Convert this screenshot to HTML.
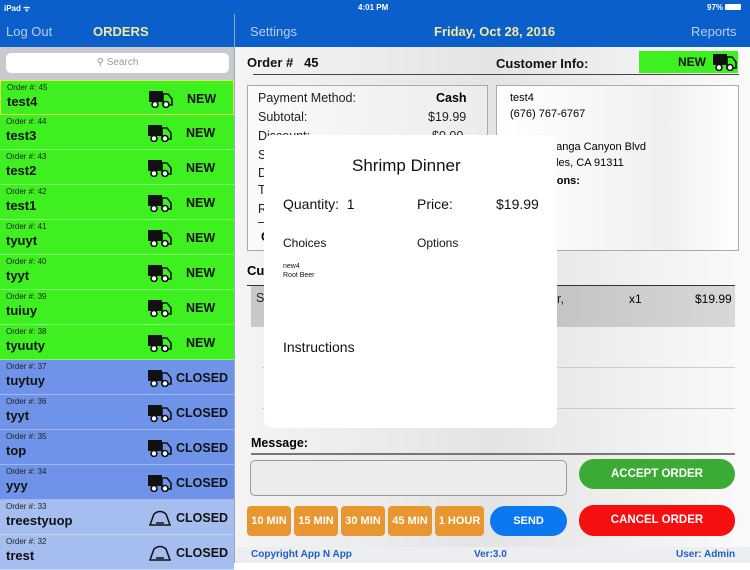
<!DOCTYPE html>
<html><head><meta charset="utf-8"><style>
*{margin:0;padding:0;box-sizing:border-box}
body{width:750px;height:563px;overflow:hidden;position:relative;font-family:"Liberation Sans",sans-serif;background:#fff}
.a{position:absolute;white-space:nowrap}
.row{position:absolute;left:0;width:234px;height:35px;border-bottom:1px solid rgba(255,255,255,.35)}
.row .on{position:absolute;left:6px;top:2px;font-size:8px;color:#222}
.row .nm{position:absolute;left:6px;top:13px;font-size:13px;font-weight:bold;color:#111}
.row .st{position:absolute;top:11px;font-size:12.5px;font-weight:bold;color:#111}
.row svg{position:absolute;top:9px;left:148px}
.tb{position:absolute;top:506px;height:30px;background:#e8962f;color:#fff;font-size:11px;font-weight:bold;text-align:center;line-height:30px;border-radius:4px;width:31px}
.pl{font-size:12.5px;color:#222}
</style></head><body>
<div class="a" style="left:0;top:0;width:750px;height:47px;background:#0a5fcb"></div>
<div class="a" style="left:4px;top:3px;font-size:8px;color:#fff;font-weight:bold">iPad ᯤ</div>
<div class="a" style="left:358px;top:3px;font-size:8px;color:#fff;font-weight:bold">4:01 PM</div>
<div class="a" style="left:707px;top:3px;font-size:8px;color:#fff;font-weight:bold">97%</div>
<div class="a" style="left:725px;top:4px;width:16px;height:6px;background:#fff;border-radius:1px"></div>
<div class="a" style="left:6px;top:24px;font-size:13px;color:#b9cdec">Log Out</div>
<div class="a" style="left:93px;top:24px;font-size:13px;color:#f0ea9a;font-weight:bold">ORDERS</div>
<div class="a" style="left:234px;top:14px;width:1px;height:549px;background:#9ab"></div>
<div class="a" style="left:250px;top:24px;font-size:13px;color:#b9cdec">Settings</div>
<div class="a" style="left:434px;top:24px;font-size:13px;color:#f0ea9a;font-weight:bold">Friday, Oct 28, 2016</div>
<div class="a" style="left:691px;top:24px;font-size:13px;color:#b9cdec">Reports</div>
<div class="a" style="left:0;top:47px;width:234px;height:33px;background:#c9c9ce"></div>
<div class="a" style="left:6px;top:53px;width:223px;height:20px;background:#fff;border-radius:5px;text-align:center;font-size:10px;color:#999;line-height:20px">&#9906; Search</div>
<div id="rows"></div>
<script>
var d=[[45,'test4'],[44,'test3'],[43,'test2'],[42,'test1'],[41,'tyuyt'],[40,'tyyt'],[39,'tuiuy'],[38,'tyuuty'],[37,'tuytuy'],[36,'tyyt'],[35,'top'],[34,'yyy'],[33,'treestyuop'],[32,'trest']];
var h='';
var truck='<path d="M0 1h14v11H0z" fill="#111"/><path d="M14 4h5l4 5v6H14z" fill="none" stroke="#111" stroke-width="1.6"/><circle cx="6" cy="14.5" r="3" fill="#fff" stroke="#111" stroke-width="1.6"/><circle cx="17" cy="14.5" r="3" fill="#fff" stroke="#111" stroke-width="1.6"/>';
var bag='<path d="M2 16 L6 5 Q12 0 18 5 L22 16 Z" fill="none" stroke="#111" stroke-width="1.5"/><path d="M8 14h8" stroke="#111" stroke-width="1.5"/>';
d.forEach(function(r,i){
 var y=80+i*35,bg=i<8?'#3ef01f':(i<12?'#6f93e8':'#a6bdf0');
 var st=i<8?'<div class="st" style="left:186px">NEW</div>':'<div class="st" style="left:176px">CLOSED</div>';
 var ic=i<12?truck:bag;
 var bd=i==0?'border:1.5px solid #e4e845;':'';
 h+='<div class="row" style="top:'+y+'px;background:'+bg+';'+bd+'"><div class="on">Order #: '+r[0]+'</div><div class="nm">'+r[1]+'</div><svg width="24" height="18" viewBox="0 0 24 18">'+ic+'</svg>'+st+'</div>';
});
document.getElementById('rows').innerHTML=h;
</script>
<div class="a" style="left:235px;top:47px;width:515px;height:500px;background:linear-gradient(90deg,#f4f4f4,#e4e4e4 50%,#fafafa)"></div>
<div class="a" style="left:247px;top:55px;font-size:13px;font-weight:bold;color:#111">Order #&nbsp;&nbsp; 45</div>
<div class="a" style="left:253px;top:74px;width:486px;height:1px;background:#444"></div>
<div class="a" style="left:496px;top:56px;font-size:13px;font-weight:bold;color:#111">Customer Info:</div>
<div class="a" style="left:639px;top:51px;width:99px;height:22px;background:#3ef01f"></div>
<div class="a" style="left:678px;top:55px;font-size:12px;font-weight:bold;color:#111">NEW</div>
<svg class="a" style="left:713px;top:53px" width="24" height="18" viewBox="0 0 24 18"><path d="M0 1h14v11H0z" fill="#111"/><path d="M14 4h5l4 5v6H14z" fill="none" stroke="#111" stroke-width="1.6"/><circle cx="6" cy="14.5" r="3" fill="#fff" stroke="#111" stroke-width="1.6"/><circle cx="17" cy="14.5" r="3" fill="#fff" stroke="#111" stroke-width="1.6"/></svg>
<div class="a" style="left:247px;top:85px;width:241px;height:166px;border:1px solid #aaa;background:linear-gradient(90deg,#fafafa,#ececec)"></div>
<div class="a pl" style="left:258px;top:91px">Payment Method:</div><div class="a" style="left:436px;top:91px;font-size:12.5px;font-weight:bold">Cash</div>
<div class="a pl" style="left:258px;top:110px">Subtotal:</div><div class="a pl" style="left:428px;top:110px">$19.99</div>
<div class="a pl" style="left:258px;top:129px">Discount:</div><div class="a pl" style="left:432px;top:129px">$0.00</div>
<div class="a pl" style="left:258px;top:148px">S</div><div class="a pl" style="left:258px;top:166px">D</div><div class="a pl" style="left:258px;top:183px">T</div><div class="a pl" style="left:258px;top:202px">R</div>
<div class="a" style="left:258px;top:222px;width:8px;height:1px;background:#333"></div>
<div class="a" style="left:261px;top:230px;font-size:12.5px;font-weight:bold">C</div>
<div class="a" style="left:496px;top:85px;width:243px;height:166px;border:1px solid #aaa;background:linear-gradient(90deg,#fff,#f0f0f0 70%,#fff)"></div>
<div class="a" style="left:510px;top:92px;font-size:11px">test4</div>
<div class="a" style="left:510px;top:108px;font-size:11px">(676) 767-6767</div>
<div class="a" style="left:550px;top:141px;font-size:11px">panga Canyon Blvd</div>
<div class="a" style="left:550px;top:157px;font-size:11px">eles, CA 91311</div>
<div class="a" style="left:550px;top:175px;font-size:11px;font-weight:bold">tions:</div>
<div class="a" style="left:247px;top:263px;font-size:13px;font-weight:bold">Cu</div>
<div class="a" style="left:247px;top:285px;width:488px;height:1px;background:#333"></div>
<div class="a" style="left:251px;top:286px;width:484px;height:41px;background:linear-gradient(90deg,#c8c8c8,#bdbdbd 50%,#d8d8d8)"></div>
<div class="a pl" style="left:256px;top:291px">S</div>
<div class="a pl" style="left:557px;top:292px">r,</div>
<div class="a" style="left:629px;top:292px;font-size:12px">x1</div>
<div class="a" style="left:695px;top:292px;font-size:12px">$19.99</div>
<div class="a" style="left:262px;top:367px;width:473px;height:1px;background:#ccc"></div>
<div class="a" style="left:262px;top:408px;width:473px;height:1px;background:#ccc"></div>
<div class="a" style="left:264px;top:135px;width:293px;height:293px;background:#fff;border-radius:8px"></div>
<div class="a" style="left:352px;top:156px;font-size:17px;color:#111">Shrimp Dinner</div>
<div class="a" style="left:283px;top:196px;font-size:14px;color:#111">Quantity:&nbsp; 1</div>
<div class="a" style="left:417px;top:196px;font-size:14px;color:#111">Price:</div>
<div class="a" style="left:496px;top:196px;font-size:14px;color:#111">$19.99</div>
<div class="a" style="left:283px;top:236px;font-size:12px;color:#111">Choices</div>
<div class="a" style="left:417px;top:236px;font-size:12px;color:#111">Options</div>
<div class="a" style="left:283px;top:262px;font-size:7px;color:#111;line-height:9px">new4<br>Root Beer</div>
<div class="a" style="left:283px;top:339px;font-size:14px;color:#111">Instructions</div>
<div class="a" style="left:251px;top:436px;font-size:12.5px;font-weight:bold">Message:</div>
<div class="a" style="left:251px;top:453px;width:484px;height:2px;background:#777"></div>
<div class="a" style="left:250px;top:460px;width:317px;height:36px;border:1px solid #999;border-radius:5px;background:#ececec"></div>
<div class="a" style="left:579px;top:459px;width:156px;height:30px;background:#3cab35;border-radius:15px;color:#fff;font-size:11.5px;font-weight:bold;text-align:center;line-height:30px">ACCEPT ORDER</div>
<div class="a" style="left:579px;top:505px;width:156px;height:31px;background:#f50f0f;border-radius:15px;color:#fff;font-size:11.5px;font-weight:bold;text-align:center;line-height:31px">CANCEL ORDER</div>
<div class="tb" style="left:247px;width:44px">10 MIN</div>
<div class="tb" style="left:294px;width:44px">15 MIN</div>
<div class="tb" style="left:341px;width:44px">30 MIN</div>
<div class="tb" style="left:388px;width:44px">45 MIN</div>
<div class="tb" style="left:435px;width:49px">1 HOUR</div>
<div class="a" style="left:490px;top:506px;width:77px;height:30px;background:#0b78f0;border-radius:15px;color:#fff;font-size:11px;font-weight:bold;text-align:center;line-height:30px">SEND</div>
<div class="a" style="left:235px;top:547px;width:515px;height:16px;background:#eceef2"></div>
<div class="a" style="left:251px;top:549px;font-size:10px;font-weight:bold;color:#2060c0">Copyright App N App</div>
<div class="a" style="left:474px;top:549px;font-size:10px;font-weight:bold;color:#2060c0">Ver:3.0</div>
<div class="a" style="left:676px;top:549px;font-size:10px;font-weight:bold;color:#2060c0">User: Admin</div>
</body></html>
